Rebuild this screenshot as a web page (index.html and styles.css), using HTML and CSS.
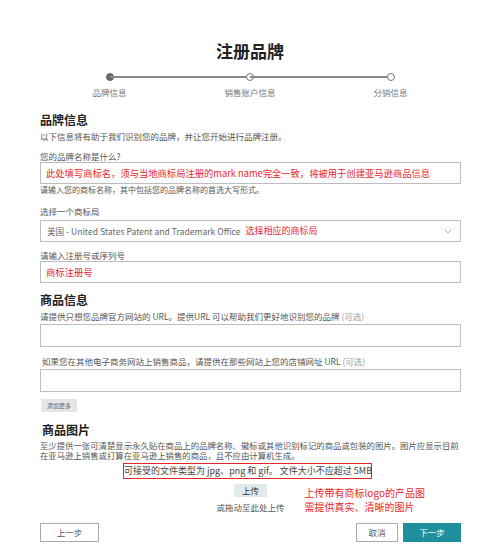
FILE: index.html
```html
<!DOCTYPE html>
<html lang="zh-CN">
<head>
<meta charset="utf-8">
<title>注册品牌</title>
<link rel="stylesheet" href="styles.css">
</head>
<body>
<header class="header">
  <h1 class="title">注册品牌</h1>
  <div class="stepper">
    <div class="step"><span class="dot dot-active"></span><span class="step-label">品牌信息</span></div>
    <span class="step-line"></span>
    <div class="step"><span class="dot"></span><span class="step-label">销售账户信息</span></div>
    <span class="step-line"></span>
    <div class="step"><span class="dot"></span><span class="step-label">分销信息</span></div>
  </div>
</header>

<main class="main">
  <h2 class="section-title">品牌信息</h2>
  <p class="sub">以下信息将有助于我们识别您的品牌，并让您开始进行品牌注册。</p>

  <label class="label label-first">您的品牌名称是什么?</label>
  <div class="field"><span class="red-note">此处填写商标名，须与当地商标局注册的mark name完全一致，将被用于创建亚马逊商品信息</span></div>
  <p class="helper">请输入您的商标名称，其中包括您的品牌名称的首选大写形式。</p>

  <label class="label label-select">选择一个商标局</label>
  <div class="field select">
    <span class="select-value">美国 - United States Patent and Trademark Office</span>
    <span class="red-note red-inline">选择相应的商标局</span>
    <svg class="chevron" width="8" height="5" viewBox="0 0 8 5"><path d="M0.5 0.5 L4 4 L7.5 0.5" fill="none" stroke="#aaa" stroke-width="1"/></svg>
  </div>

  <label class="label label-reg">请输入注册号或序列号</label>
  <div class="field"><span class="red-note">商标注册号</span></div>

  <h2 class="section-title title-goods">商品信息</h2>
  <p class="sub sub-goods">请提供只想您品牌官方网站的 URL。提供URL 可以帮助我们更好地识别您的品牌 <span class="opt">(可选)</span></p>
  <div class="field field-tall field-url"></div>

  <label class="label label-shop">如果您在其他电子商务网站上销售商品，请提供在那些网站上您的店铺网址 URL <span class="opt">(可选)</span></label>
  <div class="field field-tall"></div>

  <button class="add-more" type="button">添加更多</button>

  <h2 class="section-title title-pics">商品图片</h2>
  <p class="para">至少提供一张可清楚显示永久贴在商品上的品牌名称、徽标或其他识别标记的商品或包装的图片。图片应显示目前<br>在亚马逊上销售或打算在亚马逊上销售的商品，且不应由计算机生成。</p>

  <div class="filetypes-wrap"><span class="filetypes">可接受的文件类型为 jpg、png 和 gif。 文件大小不应超过 5MB</span></div>

  <div class="upload-row">
    <div></div>
    <div class="upload-col">
      <button class="upload-btn" type="button">上传</button>
      <span class="drag">或拖动至此处上传</span>
    </div>
    <div class="annot">上传带有商标logo的产品图<br>需提供真实、清晰的图片</div>
  </div>

  <div class="footer">
    <button class="btn btn-ghost btn-prev" type="button">上一步</button>
    <div class="footer-right">
      <button class="btn btn-ghost btn-cancel" type="button">取消</button>
      <button class="btn btn-primary" type="button">下一步</button>
    </div>
  </div>
</main>
</body>
</html>
```

FILE: styles.css
```css
* { box-sizing: border-box; }

html, body {
  margin: 0;
  padding: 0;
  background: #fff;
}

body {
  width: 500px;
  height: 554px;
  overflow: hidden;
  font-family: "Noto Sans CJK SC", "Noto Sans", sans-serif;
  color: #444;
}

.header {
  padding-top: 41px;
  display: flex;
  flex-direction: column;
  align-items: center;
}

.title {
  margin: 0;
  font-size: 17px;
  line-height: 20px;
  font-weight: 700;
  color: #222;
}

.stepper {
  margin-top: 12px;
  width: 281px;
  display: flex;
  align-items: flex-start;
}

.step {
  width: 0;
  display: flex;
  flex-direction: column;
  align-items: center;
}

.dot {
  flex: none;
  width: 8px;
  height: 8px;
  border-radius: 50%;
  border: 1px solid #777;
  background: #fff;
}

.dot-active {
  background: #666;
  border-color: #666;
}

.step-line {
  flex: 1;
  height: 2px;
  margin-top: 3px;
  background: #888;
}

.step-label {
  margin-top: 6px;
  white-space: nowrap;
  font-size: 8.5px;
  line-height: 10px;
  color: #777;
}

.main {
  width: 421px;
  margin-left: 40px;
  display: flex;
  flex-direction: column;
  align-items: stretch;
}

.section-title {
  margin: 16px 0 0;
  font-size: 12px;
  line-height: 14px;
  font-weight: 700;
  color: #222;
}

.title-goods { margin-top: 10px; }
.title-pics { margin-top: 11px; margin-left: 2px; }

.sub {
  margin: 3.5px 0 0;
  font-size: 8.5px;
  line-height: 11px;
  color: #555;
  white-space: nowrap;
}

.opt { color: #999; }

.label {
  display: block;
  font-size: 8.5px;
  line-height: 11px;
  color: #555;
  white-space: nowrap;
}

.label-first { margin-top: 9.5px; }
.label-select { margin-top: 11px; margin-bottom: 3px; }
.label-reg { margin-top: 8px; }
.label-shop { margin-top: 9px; margin-bottom: 2px; margin-left: 2px; }

.field {
  height: 22px;
  border: 1px solid #bdbdbd;
  background: #fff;
  display: flex;
  align-items: center;
  padding: 0 5px;
}

.field-tall { height: 23px; }
.field-url { margin-top: 2.5px; }

.red-note {
  color: #e8262a;
  font-size: 9.3px;
  line-height: 12px;
  white-space: nowrap;
}

.select {
  padding-left: 6px;
  padding-right: 8px;
}

.select-value {
  font-size: 8.6px;
  color: #666;
  white-space: nowrap;
}

.red-inline {
  margin-left: 5px;
  font-size: 9px;
}

.chevron {
  margin-left: auto;
}

.helper {
  margin: 1px 0 0;
  font-size: 8px;
  line-height: 10px;
  color: #555;
  white-space: nowrap;
}

.add-more {
  align-self: flex-start;
  margin: 7px 0 0 1px;
  height: 13px;
  width: 36px;
  padding: 0;
  border: none;
  background: #e6e6e6;
  font-family: inherit;
  font-size: 6px;
  line-height: 13px;
  color: #666;
}

.para {
  margin: 2.5px -12px 0 0;
  font-size: 8.4px;
  line-height: 10.5px;
  color: #555;
  white-space: nowrap;
}

.filetypes-wrap {
  margin-top: 2.5px;
  display: flex;
  padding-left: 83px;
}

.filetypes {
  width: 249px;
  height: 16px;
  border: 1.5px solid #e2262a;
  font-size: 9px;
  line-height: 13px;
  color: #444;
  text-align: center;
  white-space: nowrap;
}

.upload-row {
  margin-top: 5px;
  display: grid;
  grid-template-columns: 1fr auto 1fr;
}

.upload-col {
  display: flex;
  flex-direction: column;
  align-items: center;
}

.upload-btn {
  height: 13px;
  width: 33px;
  padding: 0;
  border: none;
  background: #e1e9ed;
  font-family: inherit;
  font-size: 8.5px;
  line-height: 13px;
  color: #333;
}

.drag {
  margin-top: 5px;
  font-size: 8.5px;
  line-height: 10px;
  color: #555;
  white-space: nowrap;
}

.annot {
  margin-top: 2px;
  padding-left: 20px;
  font-size: 10px;
  line-height: 14px;
  color: #e8262a;
  white-space: nowrap;
}

.footer {
  margin-top: 9px;
  display: flex;
  justify-content: space-between;
}

.footer-right {
  display: flex;
  gap: 5px;
}

.btn {
  height: 19px;
  padding: 0;
  font-family: inherit;
  font-size: 8.5px;
  line-height: 17px;
}

.btn-ghost {
  background: #fff;
  border: 1px solid #aaa;
  color: #555;
}

.btn-prev { width: 59px; }
.btn-cancel { width: 42px; }

.btn-primary {
  width: 58px;
  background: #1f8f9d;
  border: 1px solid #1f8f9d;
  color: #fff;
}
```
